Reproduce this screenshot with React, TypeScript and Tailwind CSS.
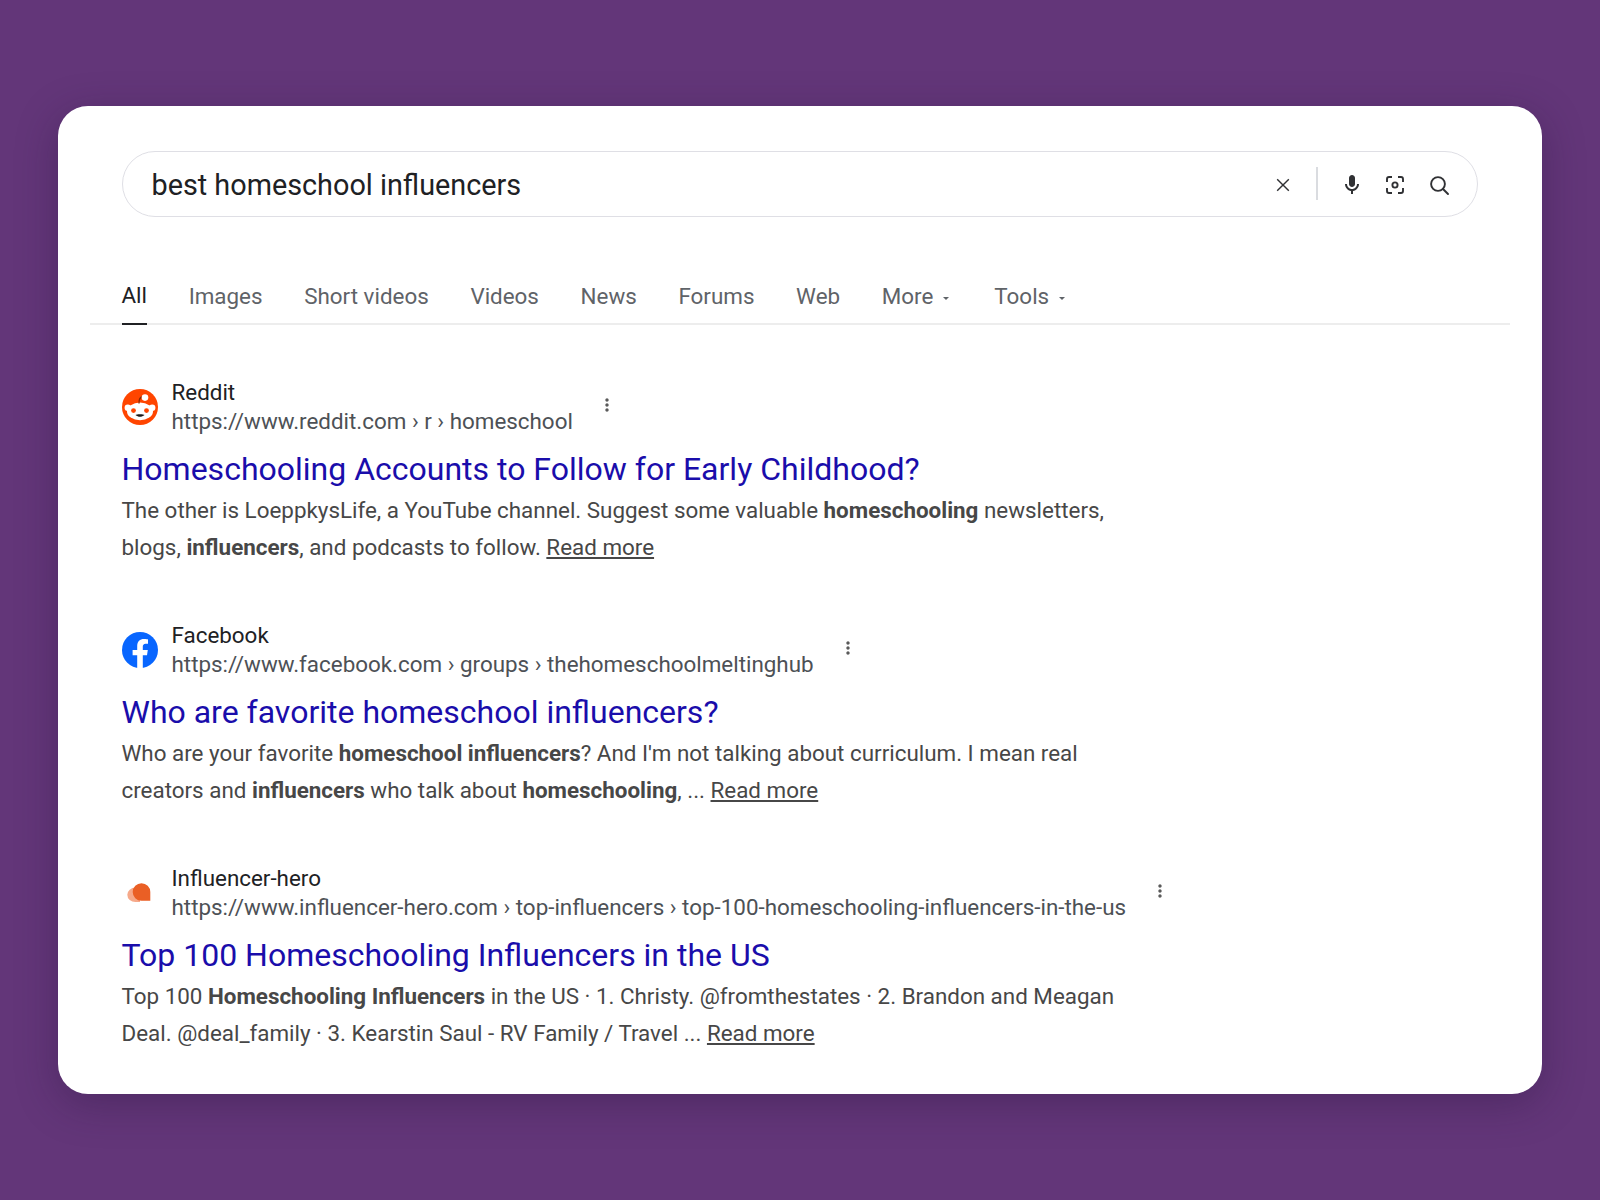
import React from 'react';

const tabs = ['Images', 'Short videos', 'Videos', 'News', 'Forums', 'Web'];

const Caret = () => (
  <svg className="ml-[10px] mt-[2px] h-[3px] w-[6px]" viewBox="0 0 6 3">
    <path d="M0 0h6L3 3z" fill="#5f6368" />
  </svg>
);

const Dots = () => (
  <svg className="mb-[4px] ml-[24px] h-[20px] w-[20px] shrink-0" viewBox="0 0 24 24" fill="#5a5a5a">
    <path d="M12 8c1.1 0 2-.9 2-2s-.9-2-2-2-2 .9-2 2 .9 2 2 2zm0 2c-1.1 0-2 .9-2 2s.9 2 2 2 2-.9 2-2-.9-2-2-2zm0 6c-1.1 0-2 .9-2 2s.9 2 2 2 2-.9 2-2-.9-2-2-2z" />
  </svg>
);

const RedditIcon = () => (
  <svg className="h-[36px] w-[36px]" viewBox="0 0 36 36">
    <circle cx="18" cy="18" r="18" fill="#ff4500" />
    <circle cx="5.8" cy="18.8" r="3.2" fill="#fff" />
    <circle cx="30.2" cy="18.8" r="3.2" fill="#fff" />
    <ellipse cx="18" cy="22.4" rx="13" ry="8.8" fill="#fff" />
    <path d="M17 14.500c-.2-3.400 1.200-6.500 4.200-7" fill="none" stroke="#8a2600" strokeWidth="1.3" />
    <circle cx="23" cy="8.600" r="3.300" fill="#fff" />
    <circle cx="11.500" cy="21.600" r="2.400" fill="#ff4500" />
    <circle cx="24.500" cy="21.600" r="2.400" fill="#ff4500" />
    <path d="M13.500 26c2.800 2.400 6.200 2.400 9 0-.6-.9-8.400-.9-9 0z" fill="#1a1a1b" />
  </svg>
);

const FacebookIcon = () => (
  <svg className="h-[36px] w-[36px]" viewBox="0 0 36 36">
    <circle cx="18" cy="18" r="18" fill="#0866ff" />
    <path d="M25 23.2 25.8 18h-5v-3.4c0-1.4.7-2.8 2.9-2.8H26V7.4s-2-.4-4-.4c-4.1 0-6.8 2.500-6.800 7V18h-4.600v5.200h4.600V36h5.600V23.200z" fill="#fff" />
  </svg>
);

const HeroIcon = () => (
  <svg className="h-[36px] w-[36px]" viewBox="0 0 36 36">
    <path d="M13.500 12.500a8.200 7.300 0 0 0 0 14.600h4.500V12.500z" fill="#f6a98a" />
    <path d="M19.500 8.200a8.800 8.800 0 0 0 0 17.600h8.800V17a8.800 8.800 0 0 0-8.800-8.800z" fill="#ea5f25" />
  </svg>
);

type Result = {
  icon: React.ReactNode;
  site: string;
  url: string;
  title: string;
  lines: React.ReactNode[];
};

const results: Result[] = [
  {
    icon: <RedditIcon />,
    site: 'Reddit',
    url: 'https://www.reddit.com › r › homeschool',
    title: 'Homeschooling Accounts to Follow for Early Childhood?',
    lines: [
      <>The other is LoeppkysLife, a YouTube channel. Suggest some valuable <b>homeschooling</b> newsletters,</>,
      <>blogs, <b>influencers</b>, and podcasts to follow. <span className="underline">Read more</span></>,
    ],
  },
  {
    icon: <FacebookIcon />,
    site: 'Facebook',
    url: 'https://www.facebook.com › groups › thehomeschoolmeltinghub',
    title: 'Who are favorite homeschool influencers?',
    lines: [
      <>Who are your favorite <b>homeschool influencers</b>? And I'm not talking about curriculum. I mean real</>,
      <>creators and <b>influencers</b> who talk about <b>homeschooling</b>, ... <span className="underline">Read more</span></>,
    ],
  },
  {
    icon: <HeroIcon />,
    site: 'Influencer-hero',
    url: 'https://www.influencer-hero.com › top-influencers › top-100-homeschooling-influencers-in-the-us',
    title: 'Top 100 Homeschooling Influencers in the US',
    lines: [
      <>Top 100 <b>Homeschooling Influencers</b> in the US · 1. Christy. @fromthestates · 2. Brandon and Meagan</>,
      <>Deal. @deal_family · 3. Kearstin Saul - RV Family / Travel ... <span className="underline">Read more</span></>,
    ],
  },
];

export default function App() {
  return (
    <div className="min-h-[1200px] w-full bg-[#633679] pl-[58px] pt-[106px] font-['Roboto',sans-serif]">
      <div className="h-[988px] w-[1484px] rounded-[30px] bg-white pl-[63.5px] pr-[64px] pt-[44.5px] shadow-[0_10px_40px_rgba(40,20,60,0.35)]">
        <div className="flex h-[66.5px] items-center rounded-full border-[1.5px] border-[#dfdfe5] pl-[29px] pr-[26.5px]">
          <span className="flex-1 pt-[3px] text-[28.8px] text-[#202124]">best homeschool influencers</span>
          <svg className="mt-[2px] h-[24px] w-[24px]" viewBox="0 0 24 24" fill="#303134">
            <path d="M18.3 6.7 17.3 5.7 12 11 6.7 5.7 5.7 6.7 11 12l-5.300 5.300 1 1L12 13l5.300 5.300 1-1L13 12z" />
          </svg>
          <div className="ml-[21px] h-[33px] w-[2px] bg-[#dadce0]" />
          <svg className="ml-[22px] mt-[2px] h-[24px] w-[24px]" viewBox="0 0 24 24" fill="#303134">
            <path d="M12 14c1.66 0 3-1.34 3-3V5c0-1.66-1.34-3-3-3S9 3.34 9 5v6c0 1.66 1.34 3 3 3z" />
            <path d="M17 11c0 2.76-2.24 5-5 5s-5-2.24-5-5H5c0 3.53 2.61 6.43 6 6.92V21h2v-3.08c3.39-.49 6-3.39 6-6.92h-2z" />
          </svg>
          <svg className="ml-[19px] mt-[2px] h-[24px] w-[24px]" viewBox="0 0 24 24" fill="none" stroke="#303134" strokeWidth="1.9">
            <path d="M4 9V6a2 2 0 0 1 2-2h3M15 4h3a2 2 0 0 1 2 2v3M20 15v3a2 2 0 0 1-2 2h-3M9 20H6a2 2 0 0 1-2-2v-3" />
            <circle cx="12" cy="12" r="2.6" />
          </svg>
          <svg className="ml-[20px] mt-[2px] h-[24px] w-[24px]" viewBox="0 0 24 24" fill="none" stroke="#303134" strokeWidth="1.9">
            <circle cx="11" cy="11" r="6.9" />
            <path d="m16 16 5 5" strokeLinecap="round" />
          </svg>
        </div>

        <div className="-ml-[31.5px] -mr-[32px] mt-[54px] flex h-[54px] border-b-2 border-[#ededed] pl-[31.5px] text-[22.4px] text-[#5f6368]">
          <div className="-mb-[2px] flex items-center border-b-2 border-[#202124] pb-[2px] text-[#202124]">All</div>
          {tabs.map((t) => (
            <div key={t} className="ml-[41.65px] flex items-center">
              {t}
            </div>
          ))}
          <div className="ml-[41.65px] flex items-center">More<Caret /></div>
          <div className="ml-[45px] flex items-center">Tools<Caret /></div>
        </div>

        <div className="mt-[53.3px] flex flex-col gap-[55.7px]">
          {results.map((r) => (
            <div key={r.site}>
              <div className="flex items-center">
                <div className="mr-[14px] shrink-0">{r.icon}</div>
                <div className="text-[22.4px] leading-[28.5px]">
                  <div className="text-[#202124]">{r.site}</div>
                  <div className="whitespace-nowrap text-[#4d5156]">{r.url}</div>
                </div>
                <Dots />
              </div>
              <div className="mt-[11.5px] text-[32px] leading-[44px] text-[#1a0dab]">{r.title}</div>
              <div className="mt-[1.5px] text-[22.4px] leading-[36.7px] text-[#474747]">
                {r.lines.map((l, i) => (
                  <div key={i} className="whitespace-nowrap">{l}</div>
                ))}
              </div>
            </div>
          ))}
        </div>
      </div>
    </div>
  );
}
